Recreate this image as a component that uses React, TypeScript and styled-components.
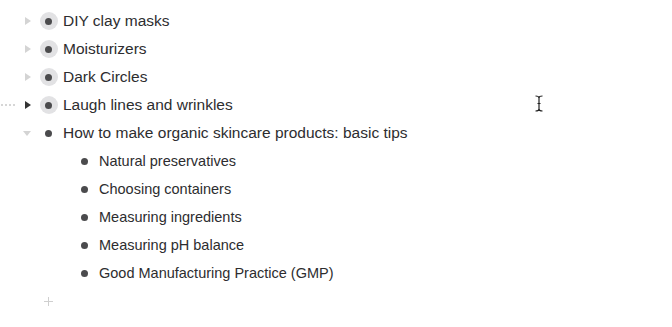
import { FC } from 'react';
import styled, { createGlobalStyle } from 'styled-components';

type Item = {
	name: string;
	children?: Item[];
	hovered?: boolean;
};

const items: Item[] = [
	{ name: 'DIY clay masks', children: [] },
	{ name: 'Moisturizers', children: [] },
	{ name: 'Dark Circles', children: [] },
	{ name: 'Laugh lines and wrinkles', children: [], hovered: true },
	{
		name: 'How to make organic skincare products: basic tips',
		children: [
			{ name: 'Natural preservatives' },
			{ name: 'Choosing containers' },
			{ name: 'Measuring ingredients' },
			{ name: 'Measuring pH balance' },
			{ name: 'Good Manufacturing Practice (GMP)' },
		],
	},
];

const GlobalStyle = createGlobalStyle`
	body {
		margin: 0;
		background: #fff;
		font-family: 'Liberation Sans', Arial, sans-serif;
		color: #333;
	}
`;

const Page = styled.div`
	position: relative;
	width: 672px;
	height: 327px;
	padding-top: 7px;
	box-sizing: border-box;
	overflow: hidden;
`;

const List = styled.div<{ $indent: number }>`
	display: flex;
	flex-direction: column;
	margin-left: ${({ $indent }) => $indent}px;
`;

const Row = styled.div`
	display: flex;
	align-items: center;
	height: 28px;
`;

const Handle = styled.div<{ $visible: boolean }>`
	width: 20px;
	display: flex;
	gap: 2px;
	padding-left: 1px;
	box-sizing: border-box;
	visibility: ${({ $visible }) => ($visible ? 'visible' : 'hidden')};

	span {
		width: 2px;
		height: 2px;
		border-radius: 50%;
		background: #c9c9c9;
	}
`;

const Toggle = styled.div`
	width: 14px;
	height: 28px;
	display: flex;
	align-items: center;
	justify-content: center;
`;

const ArrowRight = styled.div<{ $dark: boolean }>`
	width: 0;
	height: 0;
	border-top: 4px solid transparent;
	border-bottom: 4px solid transparent;
	border-left: 6px solid ${({ $dark }) => ($dark ? '#333' : '#d4d4d4')};
	margin-left: 1px;
`;

const ArrowDown = styled.div`
	width: 0;
	height: 0;
	border-left: 4px solid transparent;
	border-right: 4px solid transparent;
	border-top: 5px solid #d4d4d4;
	margin-top: 1px;
`;

const BulletBox = styled.div`
	width: 29px;
	height: 28px;
	display: flex;
	align-items: center;
	justify-content: center;
`;

const Bullet = styled.div<{ $collapsed: boolean }>`
	width: 18px;
	height: 18px;
	border-radius: 50%;
	display: flex;
	align-items: center;
	justify-content: center;
	background: ${({ $collapsed }) => ($collapsed ? '#e2e2e4' : 'transparent')};

	&::after {
		content: '';
		width: 7px;
		height: 7px;
		border-radius: 50%;
		background: #4b4b4d;
	}
`;

const Name = styled.div<{ $child: boolean }>`
	font-size: ${({ $child }) => ($child ? '14.5px' : '15.5px')};
	line-height: 20px;
	color: #2d2d2f;
	white-space: nowrap;
`;

const AddRow = styled.div`
	display: flex;
	align-items: center;
	height: 28px;
	padding-left: 44px;
`;

const Plus = styled.div`
	position: relative;
	width: 9px;
	height: 9px;

	&::before,
	&::after {
		content: '';
		position: absolute;
		background: #cfcfcf;
	}
	&::before {
		left: 4px;
		top: 0;
		width: 1px;
		height: 9px;
	}
	&::after {
		top: 4px;
		left: 0;
		width: 9px;
		height: 1px;
	}
`;

const Cursor = styled.svg`
	position: absolute;
	left: 534px;
	top: 95px;
`;

const Node: FC<{ item: Item; child: boolean }> = ({ item, child }) => {
	const collapsed = !!item.children && item.children.length === 0;
	const expanded = !!item.children && item.children.length > 0;
	return (
		<>
			<Row>
				<Handle $visible={!!item.hovered}>
					<span />
					<span />
					<span />
					<span />
				</Handle>
				<Toggle>
					{collapsed && <ArrowRight $dark={!!item.hovered} />}
					{expanded && <ArrowDown />}
				</Toggle>
				<BulletBox>
					<Bullet $collapsed={collapsed} />
				</BulletBox>
				<Name $child={child}>{item.name}</Name>
			</Row>
			{expanded && (
				<List $indent={36}>
					{item.children!.map((c) => (
						<Node key={c.name} item={c} child />
					))}
				</List>
			)}
		</>
	);
};

const App: FC = () => (
	<>
		<GlobalStyle />
		<Page>
			<List $indent={0}>
				{items.map((item) => (
					<Node key={item.name} item={item} child={false} />
				))}
			</List>
			<AddRow>
				<Plus />
			</AddRow>
			<Cursor width="10" height="17" viewBox="0 0 10 17">
				<path
					d="M1.5 1 Q5 1 5 3 Q5 1 8.5 1 M5 3 V14 Q5 16 1.5 16 M5 14 Q5 16 8.5 16 M3.5 8.5 H6.5"
					fill="none"
					stroke="#222"
					strokeWidth="1.2"
				/>
			</Cursor>
		</Page>
	</>
);

export default App;
